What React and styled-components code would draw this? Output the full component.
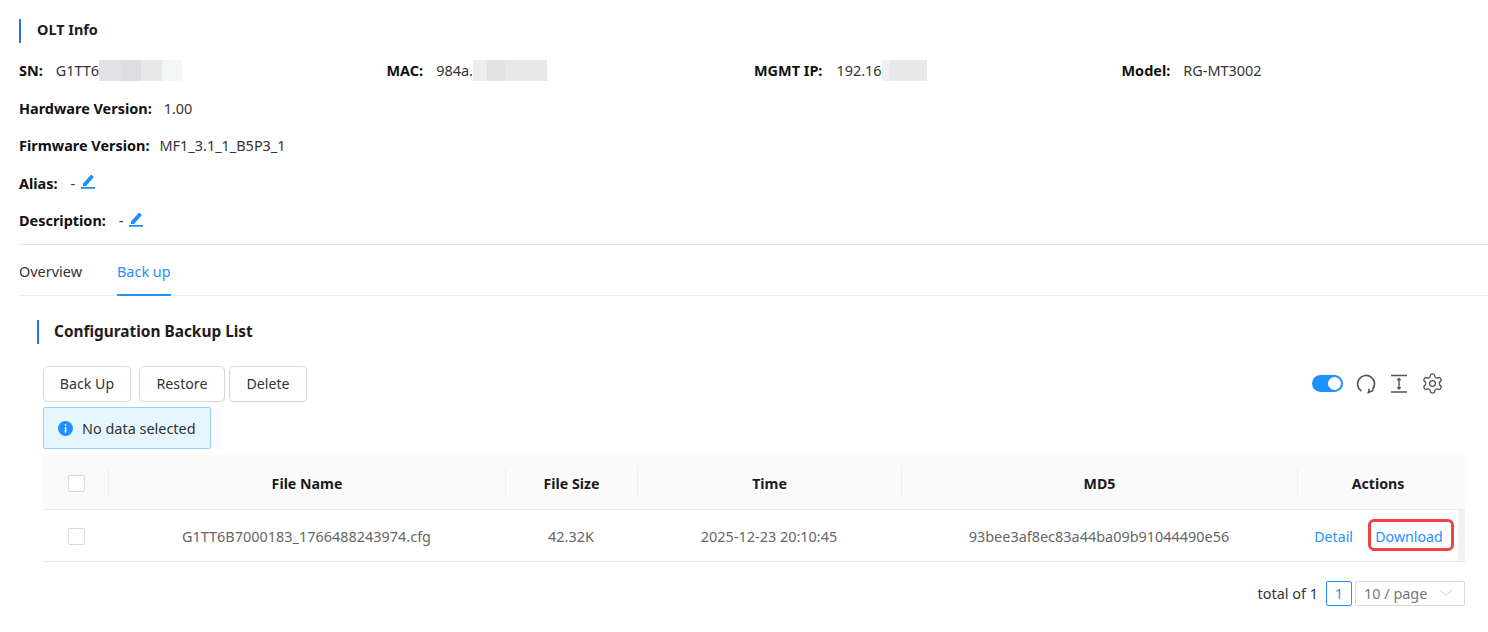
import React from "react";
import styled, { createGlobalStyle } from "styled-components";
import { Settings, ChevronDown } from "lucide-react";

const GlobalStyle = createGlobalStyle`
  html, body {
    margin: 0;
    padding: 0;
    background: #fff;
    overflow: hidden;
  }
  body {
    font-family: "Noto Sans", "Open Sans", sans-serif;
    font-size: 14.45px;
    color: #262626;
  }
`;

const Page = styled.div`
  width: 1488px;
  height: 632px;
  padding: 19px 0 0 19px;
  box-sizing: border-box;
`;

const SectionTitle = styled.h2`
  margin: 0;
  height: 24px;
  line-height: ${(props) => (props.large ? 24 : 22)}px;
  padding-left: ${(props) => (props.large ? 15 : 16)}px;
  border-left: 2px solid #2f6fed;
  font-size: ${(props) => (props.large ? 15.4 : 14.45)}px;
  font-weight: 700;
  color: #1c1c1c;
`;

const InfoGrid = styled.div`
  display: grid;
  grid-template-columns: repeat(4, 367.5px);
  margin-top: 9px;
  grid-auto-rows: 37.5px;
  align-items: center;
  border-bottom: 1px solid #e5e5e5;
  padding-bottom: 4px;
`;

const Field = styled.div`
  grid-column: ${(props) => (props.full ? "1 / -1" : "auto")};
  display: flex;
  align-items: center;
  height: 22px;
  white-space: nowrap;
`;

const Label = styled.span`
  font-weight: 700;
  color: #111;
  margin-right: ${(props) => props.gap || 12}px;
`;

const Value = styled.span`
  color: #333;
`;

const Blur = styled.span`
  display: block;
  height: 21px;
  width: ${(props) => props.width}px;
  background: ${(props) => props.fill};
`;

const EditButton = styled.svg`
  width: 14px;
  height: 15px;
  margin-left: 6px;
  margin-top: -3px;
  color: #1e90ff;
`;

const Tabs = styled.div`
  display: flex;
  gap: 35px;
  height: 50px;
  border-bottom: 1px solid #ededed;
  box-sizing: border-box;
  margin-top: 1px;
`;

const Tab = styled.div`
  height: 50px;
  line-height: 52px;
  box-sizing: border-box;
  color: ${(props) => (props.active ? "#1e90ff" : "#333")};
  border-bottom: 2px solid ${(props) => (props.active ? "#1e90ff" : "transparent")};
`;

const Panel = styled.section`
  padding: 24px 23px 0 18px;
`;

const Toolbar = styled.div`
  display: flex;
  align-items: center;
  justify-content: space-between;
  margin: 22px 0 0 6px;
  height: 36px;
  padding-right: 21px;
`;

const ButtonGroup = styled.div`
  display: flex;
  gap: 4px;
`;

const Button = styled.button`
  height: 36px;
  width: ${(props) => props.width}px;
  padding: 0;
  margin-right: ${(props) => props.gap || 0}px;
  font: inherit;
  font-size: 14.2px;
  color: #333;
  background: #fff;
  border: 1px solid #d9d9d9;
  border-radius: 5px;
  box-shadow: 0 1px 2px rgba(0, 0, 0, 0.05);
`;

const ToolIcons = styled.div`
  display: flex;
  align-items: center;
  gap: 11px;
  color: #555;
`;

const Toggle = styled.div`
  width: 31px;
  height: 17px;
  margin-right: 1px;
  border-radius: 9px;
  background: #1e90ff;
  position: relative;
  &::after {
    content: "";
    position: absolute;
    right: 2px;
    top: 2px;
    width: 13px;
    height: 13px;
    border-radius: 50%;
    background: #fff;
  }
`;

const Alert = styled.div`
  display: flex;
  align-items: center;
  gap: 9px;
  width: 168px;
  height: 42px;
  margin: 5px 0 0 6px;
  padding: 1px 0 0 14px;
  box-sizing: border-box;
  background: #e6f6ff;
  border: 1px solid #91d5ff;
  border-radius: 2px;
  color: #333;
`;

const Table = styled.div`
  margin: 6px 0 0 6px;
  width: 1422px;
`;

const columns = "65px 397px 132px 264px 396px 168px";

const HeadRow = styled.div`
  display: grid;
  grid-template-columns: ${columns};
  height: 55px;
  align-items: center;
  background: #fafafa;
  border-bottom: 1px solid #ededed;
  box-sizing: border-box;
`;

const HeadCell = styled.div`
  height: 29px;
  line-height: 33px;
  text-align: center;
  font-size: 14.2px;
  font-weight: 700;
  color: #1a1a1a;
  border-left: 1px solid #efefef;
  padding-right: ${(props) => props.inset || 0}px;
`;

const BodyRow = styled.div`
  display: grid;
  grid-template-columns: ${columns};
  height: 52px;
  align-items: center;
  border-bottom: 1px solid #e8e8e8;
  box-sizing: border-box;
`;

const Cell = styled.div`
  padding-top: 2px;
  text-align: center;
  color: #666;
`;

const CheckCell = styled.div`
  display: flex;
  justify-content: center;
  padding: 3px 0 0 2px;
`;

const Checkbox = styled.span`
  display: block;
  width: 15px;
  height: 15px;
  background: #fff;
  border: 1px solid #d9d9d9;
  border-radius: 2px;
`;

const ActionsCell = styled.div`
  height: 51px;
  display: flex;
  align-items: center;
  justify-content: flex-end;
  color: #1e90ff;
  background: linear-gradient(to left, #f2f2f2 7px, transparent 7px);
  padding-right: 11px;
  box-sizing: border-box;
`;

const Link = styled.a`
  color: #1e90ff;
  font-size: 14.2px;
  padding-top: 2px;
`;

const DownloadLink = styled(Link)`
  display: block;
  width: 86px;
  height: 32px;
  padding: 0 4px 0 0;
  line-height: 29px;
  margin-left: 15px;
  text-align: center;
  border: 3px solid #ef4444;
  border-radius: 6px;
  box-sizing: border-box;
`;

const Pager = styled.div`
  display: flex;
  align-items: center;
  justify-content: flex-end;
  width: 1422px;
  margin: 19px 0 0 6px;
  height: 25px;
  color: #333;
`;

const PageNumber = styled.div`
  width: 26px;
  height: 25px;
  line-height: 23px;
  margin: 0 3px 0 8px;
  text-align: center;
  box-sizing: border-box;
  border: 1px solid #1e90ff;
  border-radius: 2px;
  color: #1e90ff;
`;

const PageSize = styled.div`
  width: 110px;
  height: 25px;
  padding: 0 7px 0 8px;
  display: flex;
  align-items: center;
  justify-content: space-between;
  box-sizing: border-box;
  border: 1px solid #d9d9d9;
  border-radius: 2px;
  color: #777;
`;

const EditIcon = () => (
  <EditButton viewBox="0 0 14 15" fill="currentColor">
    <path d="M2 9.6 9.4 1.2a1 1 0 0 1 1.4-.1l1.4 1.3a1 1 0 0 1 .1 1.4L5 12H2z" />
    <rect x="0" y="13" width="14" height="1.8" />
  </EditButton>
);

const InfoIcon = () => (
  <svg width="15" height="15" viewBox="0 0 15 15">
    <circle cx="7.5" cy="7.5" r="7.5" fill="#1e90ff" />
    <rect x="6.8" y="3.2" width="1.5" height="1.6" fill="#fff" />
    <rect x="6.8" y="6" width="1.5" height="5.6" fill="#fff" />
  </svg>
);

const RefreshIcon = () => (
  <svg width="22" height="20" viewBox="0 0 22 20" fill="none" stroke="#555" strokeWidth="1.7">
    <path d="M6.3 17A8.5 8.5 0 1 1 17.4 15.6" />
    <path d="M14.3 14.7 13.3 18.7 18.3 16.3" strokeWidth="1.5" />
  </svg>
);

const HeightIcon = () => (
  <svg width="22" height="20" viewBox="0 0 22 20" fill="none" stroke="#555" strokeWidth="1.4">
    <path d="M3 1.5H19M3 18H19" />
    <path d="M11 4.5V15M9.3 6.2 11 4.5 12.7 6.2M9.3 13.3 11 15 12.7 13.3" />
  </svg>
);

const rows = [
  {
    name: "G1TT6B7000183_1766488243974.cfg",
    size: "42.32K",
    time: "2025-12-23 20:10:45",
    md5: "93bee3af8ec83a44ba09b91044490e56",
  },
];

export default function App() {
  return (
    <Page>
      <GlobalStyle />
      <SectionTitle>OLT Info</SectionTitle>
      <InfoGrid>
        <Field>
          <Label gap={13}>SN:</Label>
          <Value>G1TT6</Value>
          <Blur width={83} fill="linear-gradient(90deg,#e2e2e5 0 22px,#dedee0 22px 42px,#e8e8e8 42px 63px,#f5f6f6 63px 83px)" />
        </Field>
        <Field>
          <Label gap={13}>MAC:</Label>
          <Value>984a.</Value>
          <Blur width={74} fill="linear-gradient(90deg,#ececec 0 14px,#e2e2e2 14px 32px,#e8e8e8 32px 74px)" />
        </Field>
        <Field>
          <Label gap={14}>MGMT IP:</Label>
          <Value>192.16</Value>
          <Blur width={45} fill="linear-gradient(90deg,#f0f0f0 0 8px,#e8e8e8 8px 45px)" />
        </Field>
        <Field>
          <Label gap={13}>Model:</Label>
          <Value>RG-MT3002</Value>
        </Field>
        <Field full>
          <Label>Hardware Version:</Label>
          <Value>1.00</Value>
        </Field>
        <Field full>
          <Label gap={10}>Firmware Version:</Label>
          <Value>MF1_3.1_1_B5P3_1</Value>
        </Field>
        <Field full>
          <Label gap={13}>Alias:</Label>
          <Value>-</Value>
          <EditIcon />
        </Field>
        <Field full>
          <Label gap={13}>Description:</Label>
          <Value>-</Value>
          <EditIcon />
        </Field>
      </InfoGrid>
      <Tabs>
        <Tab>Overview</Tab>
        <Tab active>Back up</Tab>
      </Tabs>
      <Panel>
        <SectionTitle large>Configuration Backup List</SectionTitle>
        <Toolbar>
          <ButtonGroup>
            <Button width={88} gap={4}>Back Up</Button>
            <Button width={86}>Restore</Button>
            <Button width={78}>Delete</Button>
          </ButtonGroup>
          <ToolIcons>
            <Toggle />
            <RefreshIcon />
            <HeightIcon />
            <Settings size={23} strokeWidth={1.4} />
          </ToolIcons>
        </Toolbar>
        <Alert>
          <InfoIcon />
          No data selected
        </Alert>
        <Table>
          <HeadRow>
            <CheckCell>
              <Checkbox />
            </CheckCell>
            <HeadCell>File Name</HeadCell>
            <HeadCell>File Size</HeadCell>
            <HeadCell>Time</HeadCell>
            <HeadCell>MD5</HeadCell>
            <HeadCell inset={7}>Actions</HeadCell>
          </HeadRow>
          {rows.map((item) => (
            <BodyRow key={item.name}>
              <CheckCell>
                <Checkbox />
              </CheckCell>
              <Cell>{item.name}</Cell>
              <Cell>{item.size}</Cell>
              <Cell>{item.time}</Cell>
              <Cell>{item.md5}</Cell>
              <ActionsCell>
                <Link>Detail</Link>
                <DownloadLink>Download</DownloadLink>
              </ActionsCell>
            </BodyRow>
          ))}
        </Table>
        <Pager>
          total of 1
          <PageNumber>1</PageNumber>
          <PageSize>
            10 / page
            <ChevronDown size={22} color="#c4c4c4" strokeWidth={1} />
          </PageSize>
        </Pager>
      </Panel>
    </Page>
  );
}
